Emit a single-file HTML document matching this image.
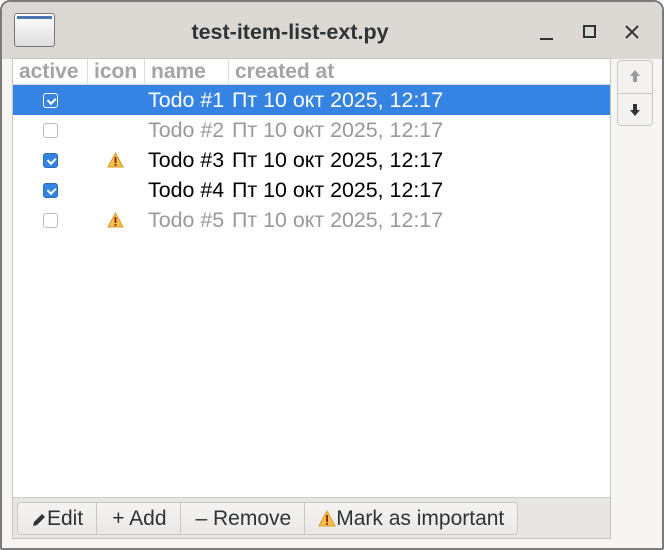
<!DOCTYPE html>
<html><head><meta charset="utf-8"><style>
*{box-sizing:border-box;margin:0;padding:0}
body{width:664px;height:550px;background:#fff;font-family:"Liberation Sans",sans-serif;position:relative;overflow:hidden}
.win{position:absolute;left:0;top:0;width:664px;height:550px;border:2px solid #7b7b7b;border-radius:10px 10px 2px 2px;background:#f6f5f4;overflow:hidden}
.title{position:absolute;left:0;top:0;width:660px;height:57px;background:#dcd9d5}
.ttxt{position:absolute;left:0;width:576px;top:18px;text-align:center;font-weight:bold;font-size:21.5px;color:#2e3436}
.appic{position:absolute;left:12px;top:11px;width:41px;height:34px;border:1px solid #777;border-radius:3px;background:linear-gradient(#fff,#ddd)}
.appic:before{content:"";position:absolute;left:2px;right:2px;top:2px;height:3px;background:#4a77b4}
.list{position:absolute;left:10px;top:56px;width:599px;height:481px;border:1px solid #c8c5c1;background:#fff}
.hdr{position:absolute;top:0;height:26px;font-size:21px;font-weight:bold;color:#a4a4a4;line-height:26px;border-right:1px solid #ddd;padding-left:6px;border-bottom:1px solid #ddd}
.row{position:absolute;left:0;width:597px;height:30px;font-size:21.4px;line-height:30px}
.row span{position:absolute}
.cb{position:absolute;left:30px;top:8px;width:15px;height:15px;border:1px solid #bbb;border-radius:3px;background:#fff}
.cb.on{background:#3584e4;border-color:#2a6ac0}
.cb.on:after{content:"";position:absolute;left:3px;top:1px;width:6px;height:4px;border-left:2px solid #fff;border-bottom:2px solid #fff;transform:rotate(-45deg) translate(-1px,2px)}
.tb{position:absolute;left:0;top:438px;width:597px;height:41px;background:#e8e6e3;border-top:1px solid #d0cdc9}
.btns{position:absolute;left:4px;top:4px;height:33px;display:flex;border:1px solid #cdc7c2;border-radius:4px;background:linear-gradient(#f4f3f2,#ebe9e7)}
.btns div{font-size:21px;color:#2e3436;line-height:31px;padding:0 13px;border-right:1px solid #cdc7c2}
.btns div:last-child{border-right:none}
.sb{position:absolute;left:615px;top:58px;width:36px;height:66px;border:1px solid #cdc7c2;border-radius:4px;background:#f3f2f1}
</style></head><body>
<div class="win">
<div class="title"><div class="appic"></div><div class="ttxt">test-item-list-ext.py</div>
<svg style="position:absolute;left:536px;top:22px" width="110" height="18"><line x1="2" y1="15" x2="15" y2="15" stroke="#2e3436" stroke-width="2"/><rect x="46" y="2" width="11" height="11" fill="none" stroke="#2e3436" stroke-width="2"/><path d="M88 2L100 14M100 2L88 14" stroke="#2e3436" stroke-width="2"/></svg></div>
<div class="list">
<div class="hdr" style="left:0;width:75px">active</div>
<div class="hdr" style="left:75px;width:57px">icon</div>
<div class="hdr" style="left:132px;width:84px">name</div>
<div class="hdr" style="left:216px;width:381px;border-right:none">created at</div>
<div class="row" style="top:26px;background:#3584e4;color:#fff"><div class="cb on" style="border-color:#fff"></div><span style="left:135px">Todo #1</span><span style="left:219px">Пт 10 окт 2025, 12:17</span></div>
<div class="row" style="top:56px;color:#999"><div class="cb"></div><span style="left:135px">Todo #2</span><span style="left:219px">Пт 10 окт 2025, 12:17</span></div>
<div class="row" style="top:86px;color:#000"><div class="cb on"></div><span style="left:94px;top:7px;line-height:0"><svg width="17" height="16"><path d="M8.5 1L16 15H1Z" fill="#f5c24a" stroke="#d49a2a"/><rect x="7.6" y="5" width="1.8" height="6" fill="#a01010"/><rect x="7.6" y="12" width="1.8" height="1.8" fill="#a01010"/></svg></span><span style="left:135px">Todo #3</span><span style="left:219px">Пт 10 окт 2025, 12:17</span></div>
<div class="row" style="top:116px;color:#000"><div class="cb on"></div><span style="left:135px">Todo #4</span><span style="left:219px">Пт 10 окт 2025, 12:17</span></div>
<div class="row" style="top:146px;color:#999"><div class="cb"></div><span style="left:94px;top:7px;line-height:0"><svg width="17" height="16"><path d="M8.5 1L16 15H1Z" fill="#f5c24a" stroke="#d49a2a"/><rect x="7.6" y="5" width="1.8" height="6" fill="#a01010"/><rect x="7.6" y="12" width="1.8" height="1.8" fill="#a01010"/></svg></span><span style="left:135px">Todo #5</span><span style="left:219px">Пт 10 окт 2025, 12:17</span></div>
<div class="tb"><div class="btns">
<div style="padding:0 13px 0 14px"><svg width="15" height="15" style="vertical-align:-2px"><path d="M1 14L2 10L10 2L13 5L5 13Z" fill="#2e3436"/></svg>Edit</div><div style="padding:0 13px 0 15px">+ Add</div><div style="padding:0 13px 0 15px">– Remove</div><div style="padding:0 13px 0 13px"><svg width="18" height="17" style="vertical-align:-2px"><path d="M9 1L17 16H1Z" fill="#f5c24a" stroke="#d49a2a"/><rect x="8.1" y="5" width="1.8" height="7" fill="#a01010"/><rect x="8.1" y="13" width="1.8" height="1.8" fill="#a01010"/></svg>Mark as important</div>
</div></div>
</div>
<div class="sb"><div style="position:absolute;left:0;top:32px;width:34px;border-top:1px solid #cdc7c2"></div>
<svg style="position:absolute;left:10px;top:8px" width="14" height="50"><path d="M7 1L12 7H9V13H5V7H2Z" fill="#999"/><path d="M7 47L12 41H9V35H5V41H2Z" fill="#2e3436"/></svg></div>
</div>
</body></html>
